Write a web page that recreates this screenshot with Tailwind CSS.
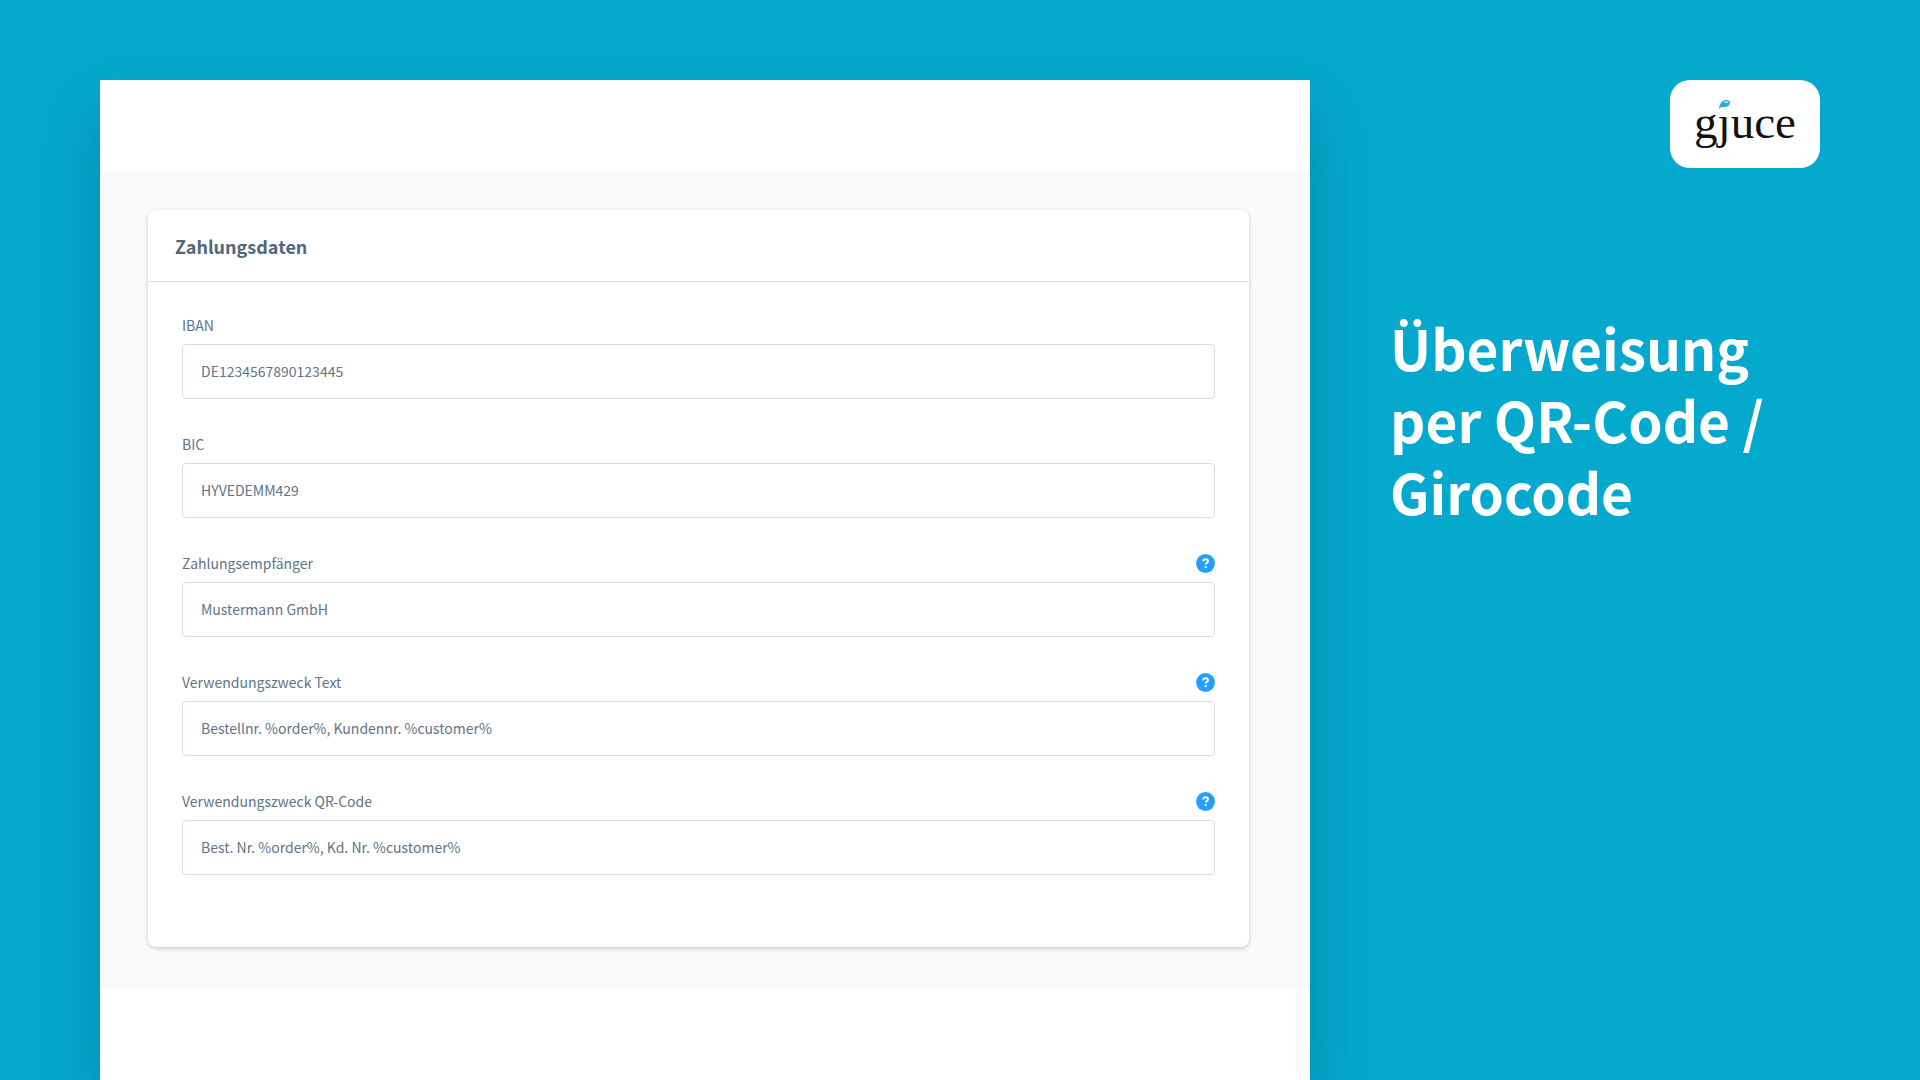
<!DOCTYPE html>
<html lang="de">
<head>
  <meta charset="UTF-8" />
  <meta name="viewport" content="width=device-width, initial-scale=1.0" />
  <title>gjuce - Überweisung per QR-Code / Girocode</title>
  <script src="https://cdn.jsdelivr.net/npm/@tailwindcss/browser@4"></script>
</head>
<body class="bg-[#05a9ce] text-[#607489] font-['Noto_Sans_CJK_JP','Noto_Sans',sans-serif]">

  <main class="flex min-h-screen overflow-hidden pl-[100px] pt-20">

    <!-- Settings panel -->
    <section class="flex-1 bg-white pt-[91px] pb-[92px] shadow-[0_30px_60px_rgba(0,50,60,0.26)]">
      <div class="bg-[#f9fafc] pl-12 pr-[61px] pt-[39px] pb-[41px]">
        <form class="rounded-lg bg-white pb-[72px] shadow-[0_2px_4px_rgba(0,0,0,0.15),0_0_5px_rgba(0,0,0,0.06)]">
          <h2 class="border-b border-[#d8dfe8] px-[27px] pt-5 pb-[19px] text-[18px] leading-8 font-bold text-[#52667a]">Zahlungsdaten</h2>

          <div class="flex flex-col gap-8 px-[34px] pt-[30px] text-[14px]">
            <div>
              <label for="iban" class="block h-8 leading-[26px]">IBAN</label>
              <input id="iban" type="text" value="DE1234567890123445" class="h-[55px] w-full rounded border border-[#d5dee8] bg-white px-[18px] pb-[2px]" />
            </div>

            <div>
              <label for="bic" class="block h-8 leading-[26px]">BIC</label>
              <input id="bic" type="text" value="HYVEDEMM429" class="h-[55px] w-full rounded border border-[#d5dee8] bg-white px-[18px] pb-[2px]" />
            </div>

            <div>
              <div class="flex h-8 items-start justify-between">
                <label for="recipient" class="leading-[26px]">Zahlungsempfänger</label>
                <button type="button" aria-label="Hilfe" class="mt-1">
                  <svg class="size-[19px]" viewBox="0 0 19 19" fill="none">
                    <circle cx="9.5" cy="9.5" r="9.4" fill="#259fff" />
                    <path d="M7.1 7.3C7.3 5.8 8.2 5.2 9.6 5.2c1.5 0 2.4.8 2.4 2 0 1.7-2.3 1.6-2.3 3.3" stroke="#fff" stroke-width="1.9" />
                    <circle cx="9.7" cy="13.1" r="1.2" fill="#fff" />
                  </svg>
                </button>
              </div>
              <input id="recipient" type="text" value="Mustermann GmbH" class="h-[55px] w-full rounded border border-[#d5dee8] bg-white px-[18px] pb-[2px]" />
            </div>

            <div>
              <div class="flex h-8 items-start justify-between">
                <label for="purposeText" class="leading-[26px]">Verwendungszweck Text</label>
                <button type="button" aria-label="Hilfe" class="mt-1">
                  <svg class="size-[19px]" viewBox="0 0 19 19" fill="none">
                    <circle cx="9.5" cy="9.5" r="9.4" fill="#259fff" />
                    <path d="M7.1 7.3C7.3 5.8 8.2 5.2 9.6 5.2c1.5 0 2.4.8 2.4 2 0 1.7-2.3 1.6-2.3 3.3" stroke="#fff" stroke-width="1.9" />
                    <circle cx="9.7" cy="13.1" r="1.2" fill="#fff" />
                  </svg>
                </button>
              </div>
              <input id="purposeText" type="text" value="Bestellnr. %order%, Kundennr. %customer%" class="h-[55px] w-full rounded border border-[#d5dee8] bg-white px-[18px] pb-[2px]" />
            </div>

            <div>
              <div class="flex h-8 items-start justify-between">
                <label for="purposeQr" class="leading-[26px]">Verwendungszweck QR-Code</label>
                <button type="button" aria-label="Hilfe" class="mt-1">
                  <svg class="size-[19px]" viewBox="0 0 19 19" fill="none">
                    <circle cx="9.5" cy="9.5" r="9.4" fill="#259fff" />
                    <path d="M7.1 7.3C7.3 5.8 8.2 5.2 9.6 5.2c1.5 0 2.4.8 2.4 2 0 1.7-2.3 1.6-2.3 3.3" stroke="#fff" stroke-width="1.9" />
                    <circle cx="9.7" cy="13.1" r="1.2" fill="#fff" />
                  </svg>
                </button>
              </div>
              <input id="purposeQr" type="text" value="Best. Nr. %order%, Kd. Nr. %customer%" class="h-[55px] w-full rounded border border-[#d5dee8] bg-white px-[18px] pb-[2px]" />
            </div>
          </div>
        </form>
      </div>
    </section>

    <!-- Title and logo -->
    <aside class="w-[610px] shrink-0 pl-20 pr-[100px] text-white">
      <div class="relative ml-auto flex h-[88px] w-[150px] items-center justify-center rounded-[20px] bg-white pb-1">
        <span class="font-['Liberation_Serif',serif] text-[47px] leading-[80px] text-[#111]">gjuce</span>
        <!-- drop in place of the j dot -->
        <svg class="absolute left-[47px] top-[18px] h-[15px] w-[16px]" viewBox="0 0 16 15">
          <rect width="16" height="15" fill="#fff" />
          <path d="M2 11C2.600 5.500 5 2 9 2c3.500 0 4.600 1 4 3-.8 3-3 4-6 4-2.500 0-3.500 0-5 2z" fill="#25b0d2" />
          <path d="M6.500 4.500c1.500-1.500 4.500-1.800 5.500-1-.6 1.600-3 2.200-5.500 1z" fill="#8fd8ea" />
        </svg>
      </div>
      <h1 class="mt-[143px] text-[55px] leading-[72px] font-bold">Überweisung<br />per QR-Code /<br />Girocode</h1>
    </aside>

  </main>

</body>
</html>
